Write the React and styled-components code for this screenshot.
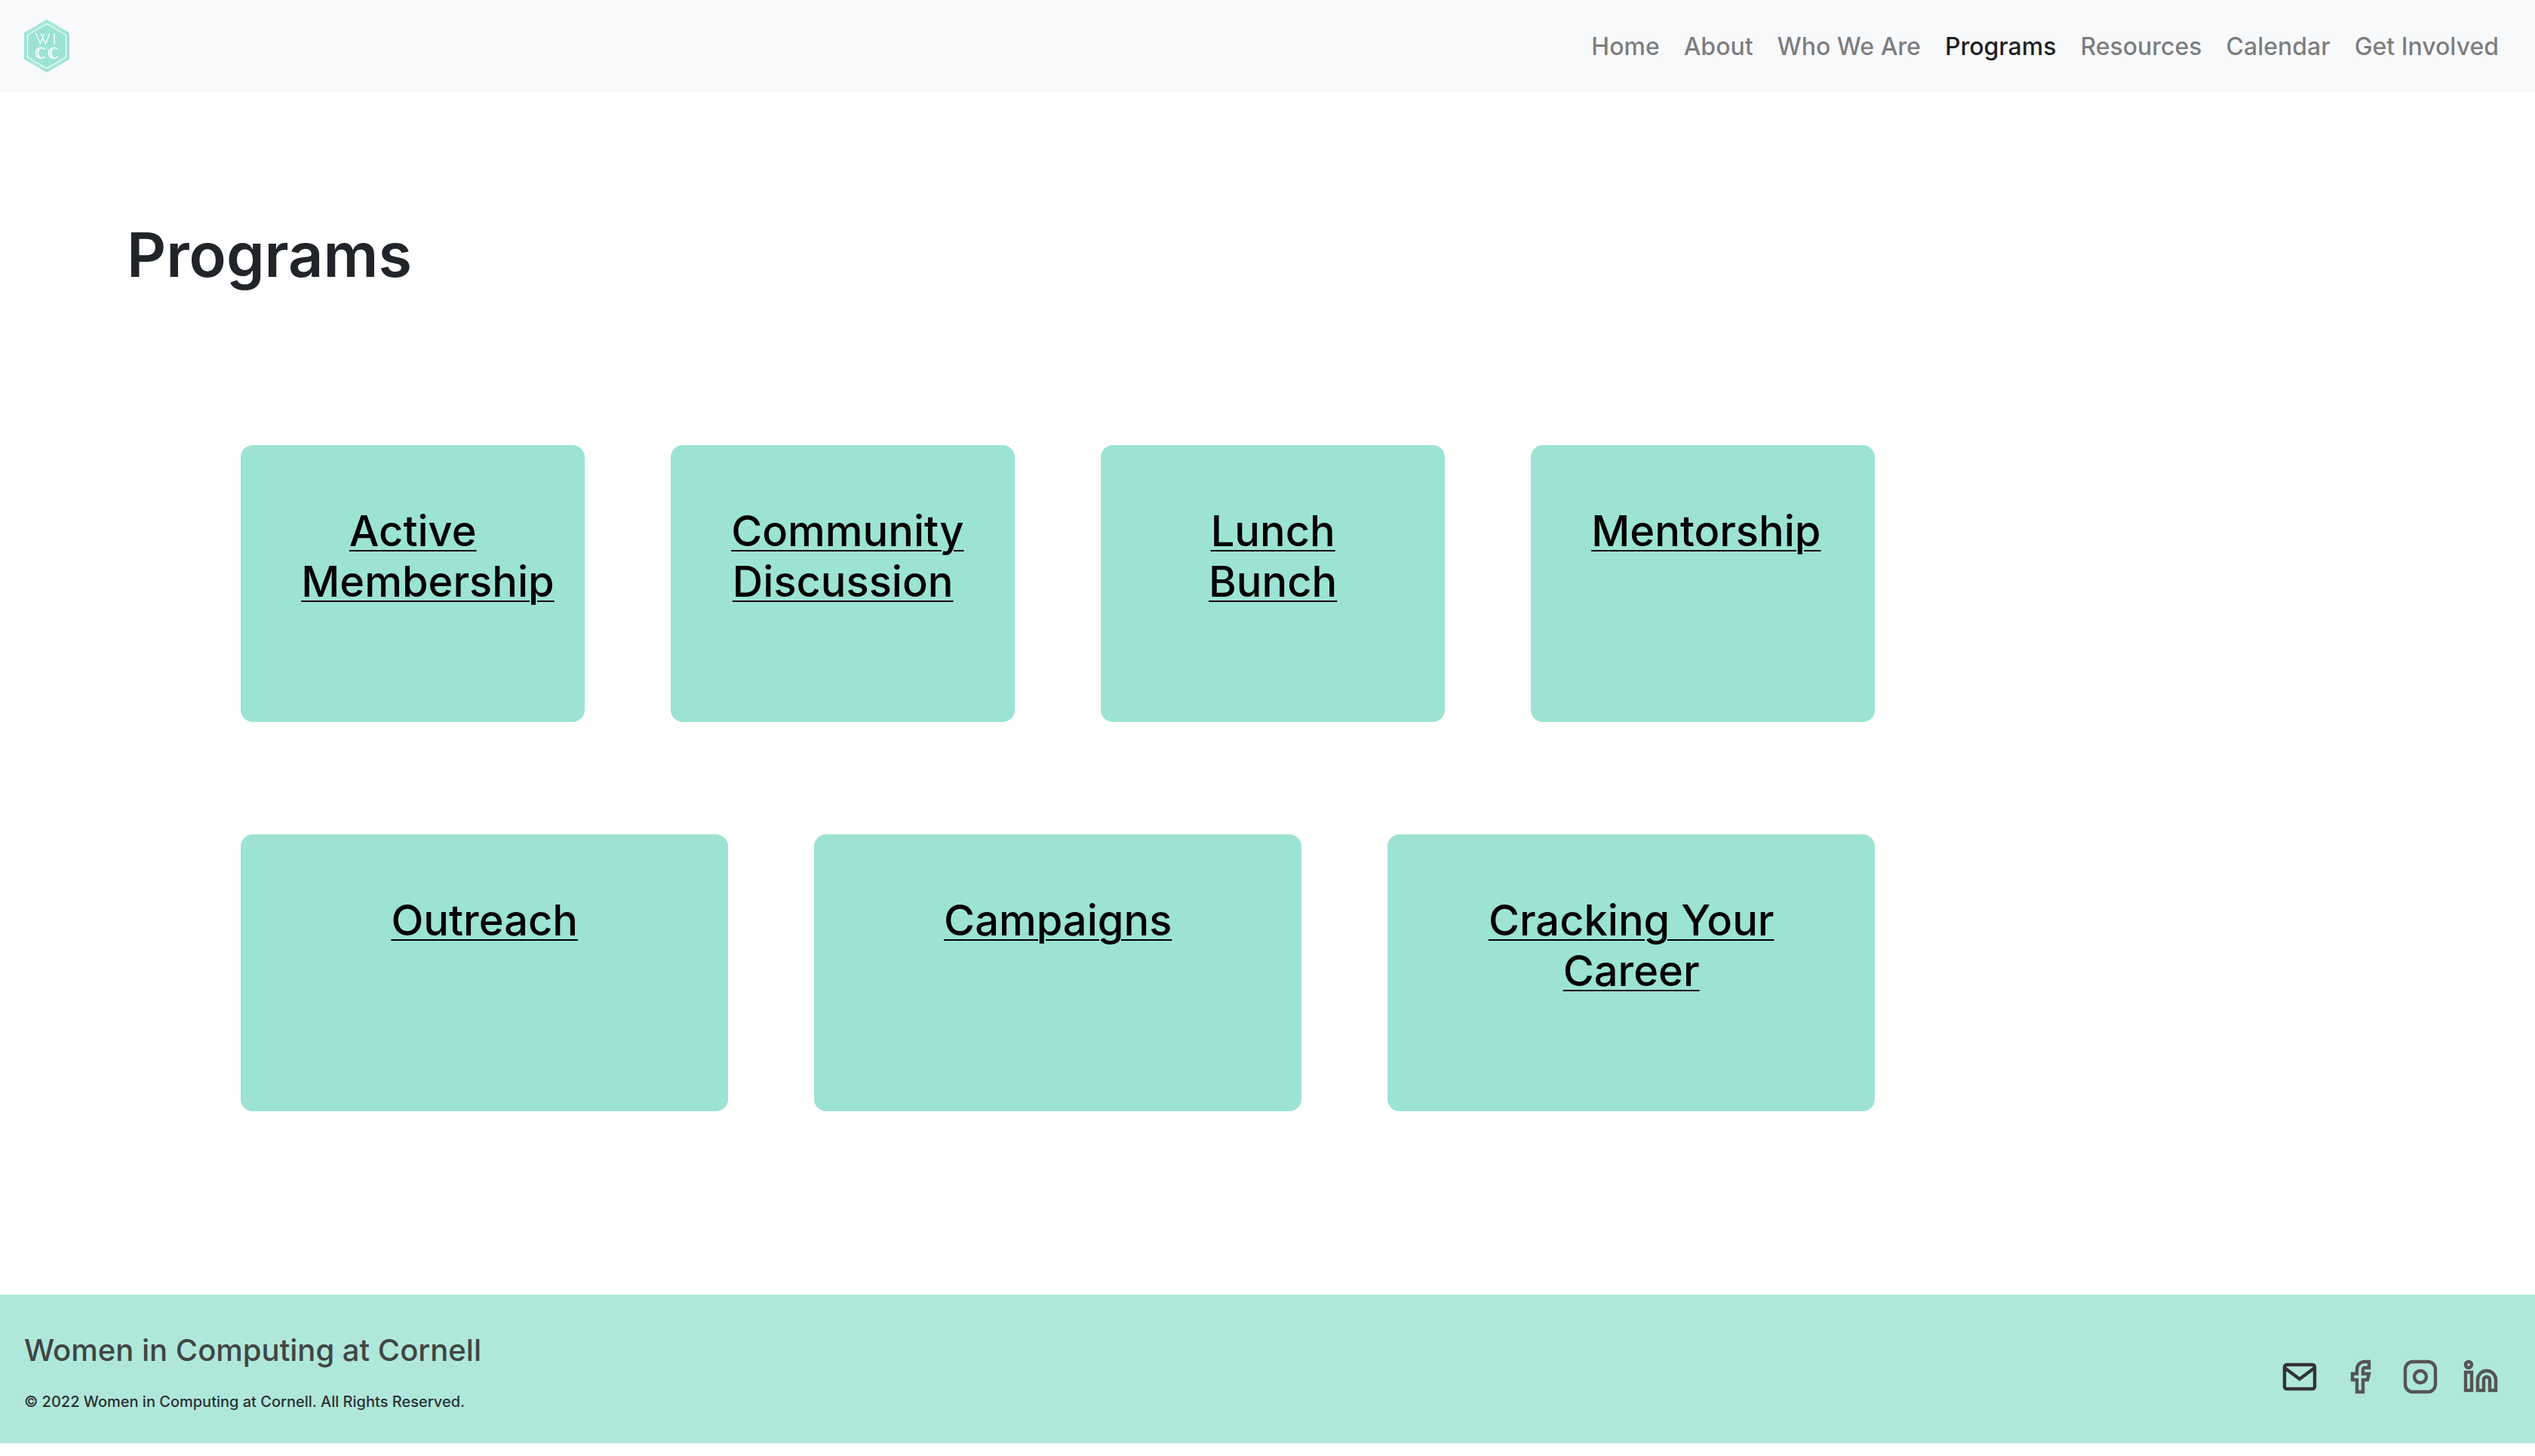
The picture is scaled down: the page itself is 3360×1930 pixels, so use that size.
import React from "react";
import styled, { createGlobalStyle } from "styled-components";

const GlobalStyle = createGlobalStyle`
  *, *::before, *::after { box-sizing: border-box; }
  body {
    margin: 0;
    background: #ffffff;
    color: #212529;
    font-family: Inter, "Liberation Sans", sans-serif;
    font-size: 32px;
    font-weight: 500;
    line-height: 48px;
  }
`;

const Navbar = styled.header`
  display: flex;
  align-items: center;
  justify-content: space-between;
  padding: 16px 32px;
  background: #f8f9fb;
`;

const Brand = styled.a`
  display: flex;
  padding: 10px 0;
`;

const Logo = styled.svg`
  display: block;
  width: 60px;
  height: 70px;
`;

const NavList = styled.nav`
  display: flex;
  flex-wrap: wrap;
`;

const NavLink = styled.a`
  padding: 18px 16px 16px;
  color: ${(p) => (p.$active ? "rgba(0, 0, 0, 0.9)" : "rgba(0, 0, 0, 0.5)")};
  text-decoration: none;
`;

const Main = styled.main`
  padding: 168px 5% 243px;
`;

const PageTitle = styled.h1`
  margin: 0;
  font-size: 81px;
  font-weight: 600;
  line-height: 96px;
`;

const Programs = styled.section`
  display: flex;
  flex-direction: column;
  gap: 149px;
  max-width: 2166px;
  margin: 204px 0 0 5%;
`;

const CardRow = styled.div`
  display: flex;
  gap: 114px;
`;

const Card = styled.article`
  flex: 1 1 0;
  min-width: 0;
  min-height: 367px;
  padding: 81px 80px 80px;
  border-radius: 16px;
  background: #9ce3d4;
`;

const CardTitle = styled.h2`
  margin: 0;
  font-size: 56px;
  font-weight: 500;
  line-height: 67px;
  text-align: center;
`;

const CardLink = styled.a`
  color: #000000;
  text-decoration: underline;
  text-decoration-thickness: 2px;
  text-underline-offset: 5px;
`;

const Footer = styled.footer`
  display: flex;
  align-items: center;
  justify-content: space-between;
  padding: 48px 48px 39px 32px;
  background: #afe8db;
`;

const FooterName = styled.p`
  margin: 0 0 26px;
  color: #404545;
  font-size: 40px;
  line-height: 52px;
`;

const Copyright = styled.p`
  margin: 0;
  color: #2c3034;
  font-size: 20px;
  line-height: 32px;
`;

const Socials = styled.div`
  display: flex;
  gap: 32px;
  padding-top: 12px;
`;

const SocialLink = styled.a`
  display: block;
  color: ${(p) => (p.$dark ? "#333333" : "#555555")};
`;

const Icon = styled.svg`
  display: block;
  width: 48px;
  height: 48px;
  fill: none;
  stroke: currentColor;
  stroke-width: 2.2;
`;

const navItems = ["Home", "About", "Who We Are", "Programs", "Resources", "Calendar", "Get Involved"];

const programRows = [
  ["Active Membership", "Community Discussion", "Lunch Bunch", "Mentorship"],
  ["Outreach", "Campaigns", "Cracking Your Career"],
];

function WiccLogo() {
  return (
    <Logo viewBox="0 0 60 70" aria-hidden="true">
      <path d="M30 0 60 17.500v35L30 70 0 52.500v-35z" fill="#9ce3d4" />
      <path d="M30 5.500 55.500 20.500v29.500L30 64.500 4.500 50V20.500z" fill="none" stroke="#fff" strokeWidth="1.200" />
      <g stroke="#fff" strokeOpacity=".5" strokeWidth="1.600" strokeDasharray="1 1" fill="none">
        <path d="M9 15 28 4M32 4l19 11M9 55l19 11M32 66l19-11" />
      </g>
      <g fill="none" stroke="#fff" strokeWidth="1.200">
        <path d="M15.500 18l6 14 5-13M22 18l6.500 14 5.500-14" />
        <path d="M40 18v14.500" strokeWidth="1.600" />
        <path d="M27.500 39.500a7 7 0 1 0 0 9.500" strokeWidth="1.600" />
        <path d="M20.500 38.500a8 8 0 0 0 0 11.500" strokeWidth="1.600" />
        <path d="M22.500 38l-4 6.300 4 6.300" strokeOpacity=".5" strokeWidth="1" />
        <path d="M44.500 39.500a7 7 0 1 0 0 9.500" strokeWidth="1.600" />
        <path d="M37.500 38.500a8 8 0 0 0 0 11.500" strokeWidth="1.600" />
        <path d="M39.500 38l-4 6.300 4 6.300" strokeOpacity=".5" strokeWidth="1" />
      </g>
    </Logo>
  );
}

const socials = [
  {
    label: "Email",
    dark: true,
    art: (
      <>
        <rect x="2" y="4" width="20" height="16" rx="1.500" />
        <path d="M2 6l10 7.500L22 6" />
      </>
    ),
  },
  {
    label: "Facebook",
    art: <path d="M18 2h-3a5 5 0 0 0-5 5v3H7v4h3v8h4v-8h3l1-4h-4V7a1 1 0 0 1 1-1h3z" />,
  },
  {
    label: "Instagram",
    art: (
      <>
        <rect x="2" y="2" width="20" height="20" rx="5" />
        <circle cx="12" cy="12" r="4" />
      </>
    ),
  },
  {
    label: "LinkedIn",
    art: (
      <>
        <path d="M16 8a6 6 0 0 1 6 6v7h-4v-7a2 2 0 0 0-4 0v7h-4v-7a6 6 0 0 1 6-6z" />
        <rect x="2" y="9" width="4" height="12" />
        <circle cx="4" cy="4" r="2" />
      </>
    ),
  },
];

export default function App() {
  return (
    <>
      <GlobalStyle />
      <Navbar>
        <Brand href="#home" aria-label="WICC home">
          <WiccLogo />
        </Brand>
        <NavList>
          {navItems.map((item) => (
            <NavLink key={item} href="#" $active={item === "Programs"}>
              {item}
            </NavLink>
          ))}
        </NavList>
      </Navbar>
      <Main>
        <PageTitle>Programs</PageTitle>
        <Programs>
          {programRows.map((row) => (
            <CardRow key={row[0]}>
              {row.map((title) => (
                <Card key={title}>
                  <CardTitle>
                    <CardLink href="#">{title}</CardLink>
                  </CardTitle>
                </Card>
              ))}
            </CardRow>
          ))}
        </Programs>
      </Main>
      <Footer>
        <div>
          <FooterName>Women in Computing at Cornell</FooterName>
          <Copyright>© 2022 Women in Computing at Cornell. All Rights Reserved.</Copyright>
        </div>
        <Socials>
          {socials.map((s) => (
            <SocialLink key={s.label} href="#" aria-label={s.label} $dark={s.dark}>
              <Icon viewBox="0 0 24 24">{s.art}</Icon>
            </SocialLink>
          ))}
        </Socials>
      </Footer>
    </>
  );
}
